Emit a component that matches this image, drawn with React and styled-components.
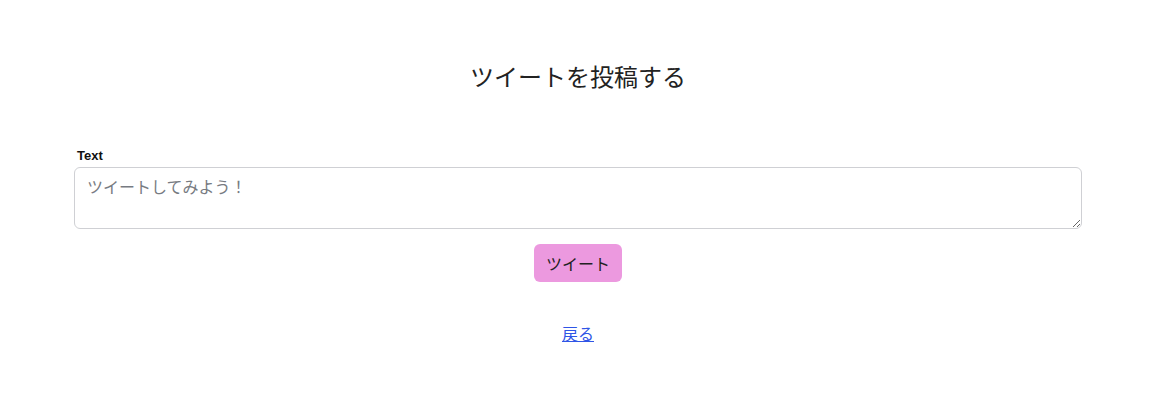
import React from "react";
import styled, { createGlobalStyle } from "styled-components";

const Global = createGlobalStyle`
  html, body { margin: 0; padding: 0; background: #fff; }
  body { font-family: "Noto Sans CJK JP", "Liberation Sans", sans-serif; color: #222; }
  * { box-sizing: border-box; }
`;

const Page = styled.div`
  width: 1160px;
  height: 401px;
  padding: 56px 78px 0 74px;
  display: flex;
  flex-direction: column;
  align-items: center;
`;

const Title = styled.h1`
  margin: 0;
  font-size: 24px;
  font-weight: 400;
  line-height: 40px;
  color: #222;
`;

const Form = styled.form`
  width: 100%;
  margin-top: 51px;
  display: flex;
  flex-direction: column;
  align-items: center;
`;

const Field = styled.div`
  width: 100%;
  display: flex;
  flex-direction: column;
`;

const Label = styled.label`
  font-family: "Liberation Sans", "Noto Sans CJK JP", sans-serif;
  font-size: 13px;
  font-weight: 700;
  color: #111;
  margin-left: 3px;
  line-height: 17px;
  margin-bottom: 3px;
`;

const TextArea = styled.textarea`
  width: 100%;
  height: 62px;
  border: 1px solid #cfd0d4;
  border-radius: 6px;
  padding: 6px 13px 7px 12px;
  font-family: "Noto Sans CJK JP", "Liberation Sans", sans-serif;
  font-size: 16px;
  line-height: 24px;
  color: #222;
  resize: vertical;
  outline: none;
  &::placeholder { color: #777b82; }
`;

const Button = styled.button`
  margin-top: 15px;
  width: 88px;
  height: 38px;
  border: none;
  border-radius: 6px;
  background: #ec99df;
  color: #222;
  font-family: "Noto Sans CJK JP", "Liberation Sans", sans-serif;
  font-size: 16px;
  cursor: pointer;
`;

const BackLink = styled.a`
  margin-top: 39px;
  font-size: 16px;
  line-height: 24px;
  color: #2f55e6;
  text-decoration: underline;
`;

export default function App() {
  return (
    <>
      <Global />
      <Page>
        <Title>ツイートを投稿する</Title>
        <Form onSubmit={(e) => e.preventDefault()}>
          <Field>
            <Label htmlFor="text">Text</Label>
            <TextArea id="text" placeholder="ツイートしてみよう！" />
          </Field>
          <Button type="submit">ツイート</Button>
        </Form>
        <BackLink href="#">戻る</BackLink>
      </Page>
    </>
  );
}
